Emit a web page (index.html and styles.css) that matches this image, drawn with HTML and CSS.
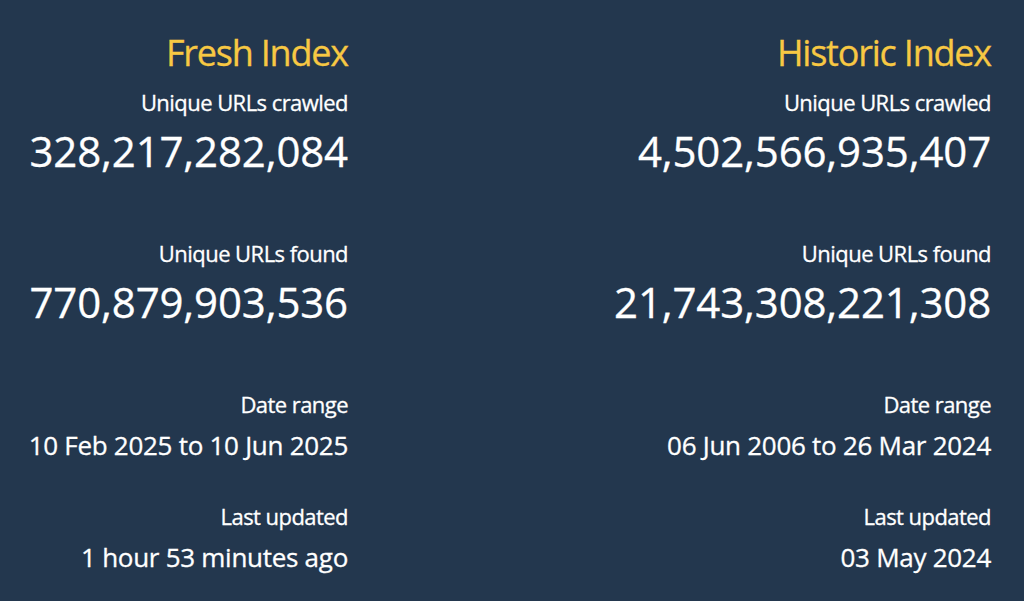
FILE: index.html
```html
<!DOCTYPE html>
<html lang="en">
<head>
<meta charset="utf-8">
<title>Index stats</title>
<link rel="stylesheet" href="styles.css">
</head>
<body>
<main class="indexes">
  <section class="index">
    <h2 class="index-title">Fresh Index</h2>
    <div class="stat stat-big">
      <div class="stat-label">Unique URLs crawled</div>
      <div class="stat-value big">328,217,282,084</div>
    </div>
    <div class="stat stat-big">
      <div class="stat-label">Unique URLs found</div>
      <div class="stat-value big">770,879,903,536</div>
    </div>
    <div class="stat stat-small">
      <div class="stat-label">Date range</div>
      <div class="stat-value small">10 Feb 2025 to 10 Jun 2025</div>
    </div>
    <div class="stat stat-small">
      <div class="stat-label">Last updated</div>
      <div class="stat-value small">1 hour 53 minutes ago</div>
    </div>
  </section>
  <section class="index">
    <h2 class="index-title">Historic Index</h2>
    <div class="stat stat-big">
      <div class="stat-label">Unique URLs crawled</div>
      <div class="stat-value big">4,502,566,935,407</div>
    </div>
    <div class="stat stat-big">
      <div class="stat-label">Unique URLs found</div>
      <div class="stat-value big">21,743,308,221,308</div>
    </div>
    <div class="stat stat-small">
      <div class="stat-label">Date range</div>
      <div class="stat-value small">06 Jun 2006 to 26 Mar 2024</div>
    </div>
    <div class="stat stat-small">
      <div class="stat-label">Last updated</div>
      <div class="stat-value small">03 May 2024</div>
    </div>
  </section>
</main>
</body>
</html>
```
FILE: styles.css
```css
html, body {
  margin: 0;
  padding: 0;
  background: #23374e;
  height: 100%;
}
body {
  font-family: "Open Sans", "Noto Sans", sans-serif;
  color: #ffffff;
  overflow: hidden;
}
.indexes {
  display: grid;
  grid-template-columns: 348px 1fr;
  padding: 31px 33px 0 0;
}
.index {
  text-align: right;
  white-space: nowrap;
  -webkit-text-stroke: 0.3px currentColor;
}
.index-title {
  margin: 0 0 13px;
  font-size: 36px;
  line-height: 44px;
  font-weight: 400;
  color: #f7c843;
  letter-spacing: -1.2px;
}
.stat-label {
  font-size: 22px;
  line-height: 28px;
  letter-spacing: -0.55px;
}
.stat-value.big {
  margin-top: 9px;
  font-size: 42px;
  line-height: 52px;
  letter-spacing: -0.15px;
}
.stat-value.small {
  margin-top: 11px;
  font-size: 26px;
  line-height: 32px;
  letter-spacing: -0.28px;
}
.stat-big {
  margin-bottom: 62px;
}
.stat-small {
  margin-bottom: 41px;
}
```
